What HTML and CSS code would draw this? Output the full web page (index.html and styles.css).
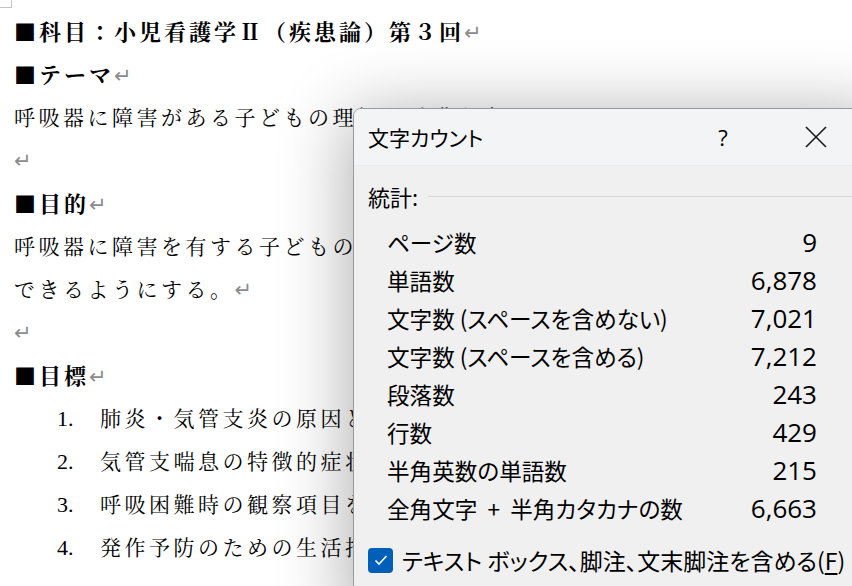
FILE: index.html
```html
<!DOCTYPE html>
<html lang="ja">
<head>
  <meta charset="UTF-8" />
  <title>文字カウント</title>
  <link rel="stylesheet" href="styles.css">
</head>
<body>

  <div class="crop-mark"></div>

  <div class="doc">
    <p class="heading">■科目：小児看護学Ⅱ（疾患論）第３回<span class="pm">↵</span></p>
    <p class="heading">■テーマ<span class="pm">↵</span></p>
    <p>呼吸器に障害がある子どもの理解と看護実践<span class="pm">↵</span></p>
    <p><span class="pm">↵</span></p>
    <p class="heading">■目的<span class="pm">↵</span></p>
    <p>呼吸器に障害を有する子どもの特徴を理解し、適切な看護を実践</p>
    <p>できるようにする。<span class="pm">↵</span></p>
    <p><span class="pm">↵</span></p>
    <p class="heading">■目標<span class="pm">↵</span></p>
    <ol class="goals">
      <li><span class="num">1.</span>肺炎・気管支炎の原因と症状を説明できる。</li>
      <li><span class="num">2.</span>気管支喘息の特徴的症状を説明できる。</li>
      <li><span class="num">3.</span>呼吸困難時の観察項目を述べることができる。</li>
      <li><span class="num">4.</span>発作予防のための生活指導を述べることができる。</li>
    </ol>
  </div>

  <!-- Word count dialog -->
  <div class="dialog">
    <div class="titlebar">
      <span class="title">文字カウント</span>
      <span class="help">?</span>
      <span class="close">
        <svg width="22" height="22" viewBox="0 0 22 22">
          <path d="M1 1 L21 21 M21 1 L1 21" stroke="#1a1a1a" stroke-width="1.6" fill="none"/>
        </svg>
      </span>
    </div>

    <div class="dlg-body">
      <div class="group-label">
        <span>統計:</span>
        <span class="rule"></span>
      </div>

      <div class="stats">
        <span>ページ数</span><span class="val">9</span>
        <span>単語数</span><span class="val">6,878</span>
        <span>文字数 (スペースを含めない)</span><span class="val">7,021</span>
        <span>文字数 (スペースを含める)</span><span class="val">7,212</span>
        <span>段落数</span><span class="val">243</span>
        <span>行数</span><span class="val">429</span>
        <span>半角英数の単語数</span><span class="val">215</span>
        <span>全角文字 &nbsp;+ &nbsp;半角カタカナの数</span><span class="val">6,663</span>
      </div>

      <label class="check-row">
        <span class="checkbox">
          <svg width="14" height="12" viewBox="0 0 14 12">
            <path d="M1.5 6.5 L5 10 L12.5 2" stroke="#fff" stroke-width="1.6" fill="none"/>
          </svg>
        </span>
        <span>テキスト ボックス、脚注、文末脚注を含める(<u>F</u>)</span>
      </label>
    </div>
  </div>

</body>
</html>
```

FILE: styles.css
```css
body {
  margin: 0;
  background: #fff;
  color: #000;
  width: 852px;
  height: 586px;
  overflow: hidden;
  position: relative;
  font-family: "Noto Serif CJK JP", "Liberation Serif", "Noto Sans CJK JP", serif;
}

.crop-mark {
  position: absolute;
  top: 0;
  left: 0;
  width: 11px;
  height: 7px;
  border-right: 1px solid #c4c4c4;
  border-bottom: 1px solid #c4c4c4;
}

.doc {
  padding: 9px 0 0 14px;
}

.doc p {
  margin: 0;
  height: 43px;
  line-height: 43px;
  font-size: 21px;
  letter-spacing: 3.5px;
  white-space: nowrap;
}

.doc p.heading {
  font-weight: bold;
  font-size: 22px;
  letter-spacing: 3px;
}

.pm {
  color: #8c8c8c;
  font-family: "Noto Sans CJK JP", "DejaVu Sans", sans-serif;
  font-size: 21px;
  font-weight: normal;
  letter-spacing: 0;
}

.goals {
  list-style: none;
  margin: 0;
  padding: 0 0 0 43px;
}

.goals li {
  height: 43px;
  line-height: 43px;
  font-size: 21px;
  letter-spacing: 3.5px;
  white-space: nowrap;
}

.goals .num {
  display: inline-block;
  width: 43px;
  letter-spacing: 0;
  font-family: "Liberation Serif", serif;
  font-size: 22px;
}

/* dialog */
.dialog {
  position: absolute;
  left: 353px;
  top: 108px;
  width: 540px;
  height: 520px;
  background: #f0f0f0;
  border: 1px solid #9a9a9a;
  border-radius: 8px;
  box-shadow: -4px 6px 70px rgba(0, 0, 0, 0.32);
  font-family: "Noto Sans CJK JP", sans-serif;
  font-feature-settings: "palt";
  color: #000;
  overflow: hidden;
}

.titlebar {
  height: 56px;
  display: flex;
  align-items: center;
  padding-left: 14px;
  background: #f3f4f5;
  border-bottom: 1px solid #ebebeb;
}

.title {
  font-size: 21px;
  flex-grow: 1;
}

.help {
  width: 46px;
  text-align: center;
  font-family: "Open Sans", sans-serif;
  font-size: 22px;
}

.close {
  width: 46px;
  margin-left: 47px;
  margin-right: 55px;
  display: flex;
  justify-content: center;
}

.dlg-body {
  padding: 15px 0 0 14px;
}

.group-label {
  display: flex;
  align-items: center;
  height: 30px;
  font-size: 22px;
}

.group-label .rule {
  flex-grow: 1;
  height: 1px;
  background: #d8d8d8;
  margin-left: 10px;
}

.stats {
  display: grid;
  grid-template-columns: 1fr auto;
  grid-auto-rows: 38px;
  align-items: center;
  width: 430px;
  margin: 12px 0 0 19px;
  font-size: 22.6px;
}

.stats .val {
  text-align: right;
  font-family: "Open Sans", sans-serif;
  font-size: 26px;
}

.check-row {
  display: flex;
  align-items: center;
  gap: 9px;
  height: 30px;
  margin-top: 18px;
  font-size: 23px;
}

.checkbox {
  width: 25px;
  height: 25px;
  border-radius: 4px;
  background: #005fb8;
  display: flex;
  align-items: center;
  justify-content: center;
}

.check-row u {
  text-underline-offset: 3px;
}
```
